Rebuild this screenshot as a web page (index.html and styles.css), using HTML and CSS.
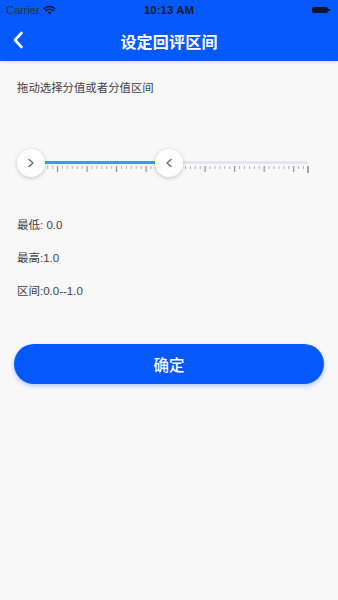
FILE: index.html
```html
<!DOCTYPE html>
<html lang="zh">
<head>
<meta charset="utf-8">
<title>设定回评区间</title>
<link rel="stylesheet" href="styles.css">
</head>
<body>
<header class="header">
  <div class="status">
    <div class="status-left">
      <span class="carrier">Carrier</span>
      <svg class="wifi" viewBox="0 0 16 12" width="13" height="10"><path d="M8 11.5 L5.6 8.9 A3.5 3.5 0 0 1 10.4 8.9 Z" fill="#141a2c"/><path d="M3.6 6.8 A6.4 6.4 0 0 1 12.4 6.8" stroke="#141a2c" stroke-width="1.8" fill="none" stroke-linecap="round"/><path d="M1.3 4.4 A9.6 9.6 0 0 1 14.7 4.4" stroke="#141a2c" stroke-width="1.8" fill="none" stroke-linecap="round"/></svg>
    </div>
    <div class="time">10:13 AM</div>
    <div class="status-right">
      <span class="battery"></span>
    </div>
  </div>
  <div class="nav">
    <svg class="back" viewBox="0 0 12 18" width="12" height="18"><path d="M9.5 2 L3 9 L9.5 16" stroke="#fff" stroke-width="2.6" fill="none" stroke-linecap="round" stroke-linejoin="round"/></svg>
    <h1 class="title">设定回评区间</h1>
  </div>
</header>
<main class="content">
  <p class="hint">拖动选择分值或者分值区间</p>
  <div class="slider">
    <svg class="ruler" viewBox="0 0 304 30" width="304" height="30">
      <defs>
        <pattern id="ticks" x="30.2" y="0" width="29.52" height="30" patternUnits="userSpaceOnUse">
          <line x1="0.5" y1="18" x2="0.5" y2="21" stroke="#b4b4b8" stroke-width="1"/>
          <line x1="5.42" y1="18" x2="5.42" y2="21" stroke="#b4b4b8" stroke-width="1"/>
          <line x1="10.34" y1="18" x2="10.34" y2="24" stroke="#8e8e92" stroke-width="1.2"/>
          <line x1="15.26" y1="18" x2="15.26" y2="21" stroke="#b4b4b8" stroke-width="1"/>
          <line x1="20.18" y1="18" x2="20.18" y2="21" stroke="#b4b4b8" stroke-width="1"/>
          <line x1="25.1" y1="18" x2="25.1" y2="21" stroke="#b4b4b8" stroke-width="1"/>
        </pattern>
      </defs>
      <line x1="138" y1="14.5" x2="291" y2="14.5" stroke="#e6e6f0" stroke-width="3"/>
      <line x1="28" y1="14.5" x2="138" y2="14.5" stroke="#4596e8" stroke-width="3"/>
      <rect x="29.5" y="17" width="260" height="8" fill="url(#ticks)"/>
      <line x1="291" y1="18" x2="291" y2="25" stroke="#7e7e82" stroke-width="1.4"/>
    </svg>
    <div class="thumb thumb-min">
      <svg viewBox="0 0 8 10" width="8" height="10"><path d="M2 1.5 L6 5 L2 8.5" stroke="#6a6a6e" stroke-width="1.4" fill="none" stroke-linecap="round" stroke-linejoin="round"/></svg>
    </div>
    <div class="thumb thumb-max">
      <svg viewBox="0 0 8 10" width="8" height="10"><path d="M6 1.5 L2 5 L6 8.5" stroke="#6a6a6e" stroke-width="1.4" fill="none" stroke-linecap="round" stroke-linejoin="round"/></svg>
    </div>
  </div>
  <div class="values">
    <p class="value">最低: 0.0</p>
    <p class="value">最高:1.0</p>
    <p class="value">区间:0.0--1.0</p>
  </div>
  <button class="confirm" type="button">确定</button>
</main>
</body>
</html>
```

FILE: styles.css
```css
* { box-sizing: border-box; }
html, body {
  margin: 0;
  padding: 0;
}
body {
  width: 338px;
  height: 600px;
  background: #f8f8f8;
  font-family: "Liberation Sans", "Noto Sans CJK SC", sans-serif;
  overflow: hidden;
}
.header {
  background: #0658ff;
  height: 61px;
  box-shadow: 0 1px 3px rgba(0, 0, 0, 0.12);
}
.status {
  height: 20px;
  display: flex;
  align-items: center;
  justify-content: space-between;
  padding: 0 6px 0 6px;
  color: #141a2c;
}
.status-left {
  display: flex;
  align-items: center;
  gap: 3px;
  width: 80px;
}
.carrier {
  font-size: 11px;
  color: #2a3048;
}
.time {
  font-size: 11.5px;
  font-weight: 700;
  color: #141a2c;
}
.status-right {
  width: 80px;
  display: flex;
  justify-content: flex-end;
  padding-right: 4px;
}
.battery {
  display: block;
  width: 16px;
  height: 6px;
  background: #10152a;
  border-radius: 2px;
  position: relative;
}
.battery::after {
  content: "";
  position: absolute;
  right: -2px;
  top: 2px;
  width: 1.5px;
  height: 2px;
  background: #10152a;
}
.nav {
  height: 41px;
  display: flex;
  align-items: center;
  justify-content: center;
  position: relative;
}
.back {
  position: absolute;
  left: 12px;
  top: 11px;
}
.title {
  margin: 0;
  font-family: "Noto Sans CJK SC", sans-serif;
  font-size: 16px;
  font-weight: 700;
  color: #fff;
  letter-spacing: 0.2px;
}
.content {
  padding: 17px 0 0 0;
}
.hint {
  margin: 0 17px;
  font-family: "Noto Sans CJK SC", sans-serif;
  font-size: 11.4px;
  line-height: 18px;
  color: #3f3f44;
}
.slider {
  position: relative;
  margin: 52px 17px 0 17px;
  width: 304px;
  height: 30px;
}
.ruler {
  display: block;
}
.thumb {
  position: absolute;
  top: 1px;
  width: 28px;
  height: 28px;
  border-radius: 50%;
  background: #fff;
  box-shadow: 0 1px 4px rgba(0, 0, 0, 0.22);
  display: flex;
  align-items: center;
  justify-content: center;
}
.thumb-min { left: 0; }
.thumb-max { left: 138px; }
.values {
  margin: 38px 17px 0 17px;
  display: flex;
  flex-direction: column;
  gap: 15px;
}
.value {
  margin: 0;
  font-family: "Liberation Sans", "Noto Sans CJK SC", sans-serif;
  font-size: 11.5px;
  line-height: 18px;
  color: #3f3f44;
}
.confirm {
  display: block;
  margin: 44px 14px 0 14px;
  width: 310px;
  height: 40px;
  border: none;
  border-radius: 20px;
  background: #0658ff;
  color: #fff;
  font-family: "Noto Sans CJK SC", sans-serif;
  font-size: 15.5px;
  font-weight: 500;
  box-shadow: 0 2px 4px rgba(6, 88, 255, 0.3);
  padding: 0;
}
```
